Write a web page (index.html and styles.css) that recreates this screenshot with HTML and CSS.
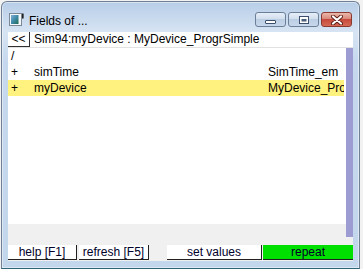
FILE: index.html
```html
<!DOCTYPE html>
<html>
<head>
<meta charset="utf-8">
<link rel="stylesheet" href="styles.css">
</head>
<body>
<div class="window">
  <div class="titlebar">
    <svg class="appicon" width="15" height="13" viewBox="0 0 15 13">
      <defs>
        <linearGradient id="ig" x1="0" y1="0" x2="1" y2="1">
          <stop offset="0" stop-color="#7fb0d6"/>
          <stop offset="0.5" stop-color="#3f8aa8"/>
          <stop offset="1" stop-color="#1d6b4e"/>
        </linearGradient>
      </defs>
      <rect x="0.5" y="0.5" width="12" height="12" fill="#f4f7fa" stroke="#7b8896"/>
      <rect x="2" y="2" width="7.5" height="9" fill="url(#ig)"/>
      <rect x="13" y="0.5" width="1.6" height="5" fill="#1c1c1c"/>
    </svg>
    <span class="title">Fields of ...</span>
    <div class="caps">
      <div class="cap">
        <svg class="g-min" width="11" height="4" viewBox="0 0 11 4"><rect x="0.5" y="0.5" width="10" height="3" rx="0.5" fill="#fff" stroke="#3b4f6b"/></svg>
      </div>
      <div class="cap">
        <svg width="10" height="8" viewBox="0 0 10 8"><rect x="0.5" y="0.5" width="9" height="7" fill="#fff" stroke="#3b4f6b"/><rect x="2.5" y="3" width="5" height="2.5" fill="#4a5f7c"/></svg>
      </div>
      <div class="cap close">
        <svg width="12" height="10" viewBox="0 0 12 10"><path d="M2 1.5 L10 8.5 M10 1.5 L2 8.5" stroke="#5a1d15" stroke-width="4" stroke-linecap="round"/><path d="M2 1.5 L10 8.5 M10 1.5 L2 8.5" stroke="#fff" stroke-width="2.2" stroke-linecap="round"/></svg>
      </div>
    </div>
  </div>
  <div class="client">
    <div class="head">
      <span class="back">&lt;&lt;</span>
      <span class="path">Sim94:myDevice : MyDevice_ProgrSimple</span>
    </div>
    <div class="middle">
      <div class="list">
        <div class="row"><span class="c1">/</span><span class="c2"></span><span class="c3"></span></div>
        <div class="row"><span class="c1">+</span><span class="c2">simTime</span><span class="c3">SimTime_em</span></div>
        <div class="row selected"><span class="c1">+</span><span class="c2">myDevice</span><span class="c3">MyDevice_ProgrSimple</span></div>
      </div>
      <div class="scroll"></div>
    </div>
    <div class="buttons">
      <span class="btn help">help [F1]</span>
      <span class="btn refresh">refresh [F5]</span>
      <span class="btn setv">set values</span>
      <span class="btn repeat">repeat</span>
    </div>
  </div>
</div>
</body>
</html>
```

FILE: styles.css
```css
html, body {
  margin: 0;
  padding: 0;
}
body {
  width: 363px;
  height: 269px;
  overflow: hidden;
  background: #f2f2f2;
  font-family: "Liberation Sans", Arial, sans-serif;
  font-size: 12px;
  color: #000;
}
.window {
  box-sizing: border-box;
  margin: 1px 0 0 1px;
  width: 359px;
  height: 268px;
  border: 1px solid #6f8095;
  border-bottom-color: #2f6676;
  border-radius: 6px 6px 0 0;
  background: linear-gradient(to bottom, #b7cde7 0px, #c6d8ed 14px, #d7e4f3 30px, #c6d8ee 60px, #c2d6ec 100%);
  box-shadow: inset 0 0 0 1px rgba(255, 255, 255, 0.45);
  padding: 0 6px 7px 6px;
  display: flex;
  flex-direction: column;
}
.titlebar {
  height: 30px;
  flex: none;
  display: flex;
  align-items: flex-start;
}
.appicon {
  margin: 11px 0 0 1px;
  flex: none;
}
.title {
  margin: 12px 0 0 5px;
  line-height: 14px;
  font-size: 12px;
  color: #000;
}
.caps {
  margin: 10px 1px 0 auto;
  display: flex;
  gap: 2px;
}
.cap {
  box-sizing: border-box;
  width: 31px;
  height: 15px;
  border: 1px solid #6c7f99;
  border-radius: 3px;
  background: linear-gradient(to bottom, #e6eef8 0%, #d3dfee 45%, #bccee4 50%, #c8d8eb 100%);
  display: flex;
  align-items: center;
  justify-content: center;
}
.g-min {
  margin-top: 5px;
}
.cap.close {
  border-color: #8a3a30;
  background: linear-gradient(to bottom, #ebb8ab 0%, #d9897a 45%, #c84a3c 50%, #d46a55 100%);
}
.client {
  flex: 1;
  background: #f0f0f0;
  display: flex;
  flex-direction: column;
}
.head {
  box-sizing: border-box;
  height: 16px;
  flex: none;
  display: flex;
  background: #fff;
  border-bottom: 1px solid #e2e2e2;
}
.back {
  box-sizing: border-box;
  width: 22px;
  height: 15px;
  border-right: 1px solid #303030;
  border-bottom: 1px solid #303030;
  text-align: center;
  line-height: 14px;
}
.path {
  padding-left: 4px;
  line-height: 15px;
  white-space: nowrap;
}
.middle {
  height: 197px;
  flex: none;
  display: flex;
  align-items: flex-start;
}
.list {
  flex: 1;
  height: 176px;
  background: #fff;
}
.row {
  display: grid;
  grid-template-columns: 23px 234px 76px;
  padding-left: 3px;
  height: 16px;
  line-height: 16px;
}
.row.selected {
  background: #fff27f;
  margin-right: 2px;
}
.c3 {
  overflow: hidden;
  white-space: nowrap;
}
.scroll {
  width: 7px;
  height: 189px;
  background: #9c9cd2;
}
.buttons {
  height: 15px;
  flex: none;
  display: flex;
}
.btn {
  box-sizing: border-box;
  height: 15px;
  background: #fff;
  border-right: 1px solid #202020;
  border-bottom: 1px solid #202020;
  text-align: center;
  line-height: 14px;
  color: #00002a;
  white-space: nowrap;
}
.help { width: 69px; }
.refresh { width: 70px; margin-left: 2px; }
.setv { width: 95px; margin-left: 18px; }
.repeat { width: 90px; margin-left: 1px; background: #00e000; border-right: none; }
```
